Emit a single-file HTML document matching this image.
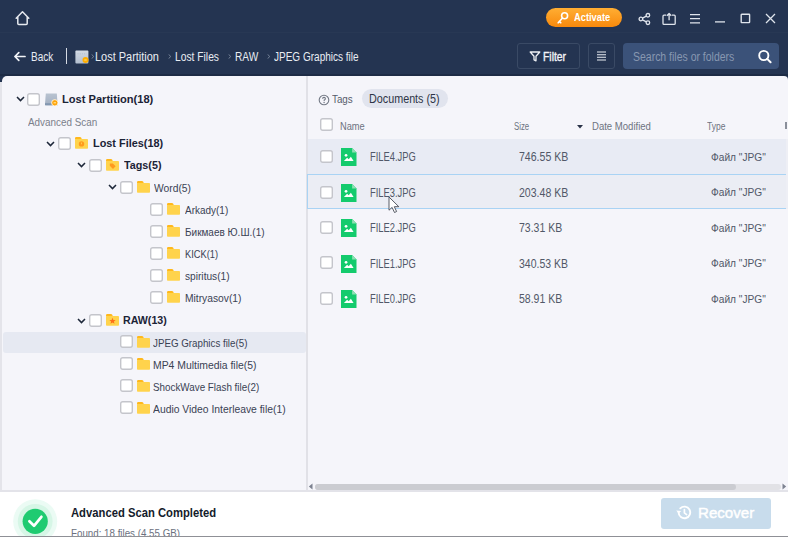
<!DOCTYPE html>
<html><head><meta charset="utf-8"><title>Recovery</title>
<style>
*{margin:0;padding:0;box-sizing:border-box}
html,body{width:788px;height:537px;overflow:hidden;background:#f4f4f9;font-family:"Liberation Sans",sans-serif}
.r{position:absolute}
.tx{position:absolute;white-space:nowrap;transform-origin:0 0}
svg{display:block}
</style></head><body>
<div class="r" style="left:0;top:0;width:788px;height:84px;background:#243451"></div>
<div class="r" style="left:0;top:32px;width:788px;height:1px;background:#283854"></div>
<div class="r" style="left:0;top:74px;width:788px;height:2px;background:#1d2b45"></div>
<svg class="r" style="left:14px;top:10px" width="17" height="17" viewBox="0 0 17 17"><path d="M2.2 8.2 L8.5 1.8 L14.8 8.2 M3.8 6.8 V13.6 Q3.8 14.6 4.8 14.6 H12.2 Q13.2 14.6 13.2 13.6 V6.8" fill="none" stroke="#e6e9ef" stroke-width="1.5" stroke-linejoin="round" stroke-linecap="round"/></svg>
<div class="r" style="left:546px;top:8px;width:76px;height:19px;border-radius:10px;background:linear-gradient(#ffae33,#f8890c)"></div>
<svg class="r" style="left:556px;top:11px" width="14" height="14" viewBox="0 0 14 14"><circle cx="8.6" cy="4.8" r="3" fill="none" stroke="#fff" stroke-width="1.6"/><path d="M6.5 7 L2.2 11.8 M3.4 10.4 L4.8 11.8" fill="none" stroke="#fff" stroke-width="1.6" stroke-linecap="round"/></svg>
<div class="tx" style="left:574.00px;top:12.11px;font-size:10.5px;line-height:10.5px;transform:scaleX(0.8863);color:#ffffff;font-weight:bold;">Activate</div>
<svg class="r" style="left:637px;top:11.5px" width="15" height="14" viewBox="0 0 15 14"><circle cx="3.9" cy="7" r="1.8" fill="none" stroke="#dfe4ec" stroke-width="1.3"/><circle cx="10.9" cy="3.3" r="1.8" fill="none" stroke="#dfe4ec" stroke-width="1.3"/><circle cx="10.9" cy="10.7" r="1.8" fill="none" stroke="#dfe4ec" stroke-width="1.3"/><path d="M5.5 6.1 L9.3 4.2 M5.5 7.9 L9.3 9.8" stroke="#dfe4ec" stroke-width="1.3"/></svg>
<svg class="r" style="left:661px;top:10.5px" width="16" height="15" viewBox="0 0 16 15"><path d="M5.2 4.2 H3 Q2 4.2 2 5.2 V12.4 Q2 13.4 3 13.4 H13.2 Q14.2 13.4 14.2 12.4 V5.2 Q14.2 4.2 13.2 4.2 H11" fill="none" stroke="#dfe4ec" stroke-width="1.3"/><path d="M8.1 9.2 V2.6 M5.9 4.8 L8.1 2.5 L10.3 4.8" fill="none" stroke="#dfe4ec" stroke-width="1.3" stroke-linejoin="round"/></svg>
<svg class="r" style="left:689px;top:13px" width="12" height="12" viewBox="0 0 12 12"><path d="M1 1.6 H11 M1 5.7 H11 M1 9.8 H11" stroke="#dfe4ec" stroke-width="1.3"/></svg>
<svg class="r" style="left:714px;top:12px" width="12" height="12" viewBox="0 0 12 12"><path d="M1 9.9 H11" stroke="#dfe4ec" stroke-width="1.3"/></svg>
<svg class="r" style="left:740px;top:13px" width="11" height="11" viewBox="0 0 11 11"><rect x="1.2" y="1.2" width="8.4" height="8.4" rx="0.6" fill="none" stroke="#dfe4ec" stroke-width="1.4"/></svg>
<svg class="r" style="left:765px;top:13px" width="11" height="11" viewBox="0 0 11 11"><path d="M1 1 L10 10 M10 1 L1 10" stroke="#dfe4ec" stroke-width="1.3"/></svg>
<svg class="r" style="left:13px;top:51px" width="13" height="11" viewBox="0 0 13 11"><path d="M12 5.5 H2.2 M5.8 1.6 L1.9 5.5 L5.8 9.4" fill="none" stroke="#f2f4f8" stroke-width="1.7" stroke-linecap="round" stroke-linejoin="round"/></svg>
<div class="tx" style="left:31.00px;top:51.14px;font-size:12.0px;line-height:12.0px;transform:scaleX(0.8333);color:#e9edf3;">Back</div>
<div class="r" style="left:66px;top:48px;width:1px;height:16px;background:#d5dae3"></div>
<svg class="r" style="left:74.5px;top:49.5px" width="14" height="14" viewBox="0 0 14 14"><defs><linearGradient id="bg2" x1="0" y1="0" x2="0" y2="1"><stop offset="0" stop-color="#d3dae4"/><stop offset="1" stop-color="#b3bfcf"/></linearGradient></defs><path d="M1.2 0.6 H12.6 Q13.4 0.6 13.4 1.6 V12.4 Q13.4 13.4 12.4 13.4 H1.4 Q0.4 13.4 0.4 12.4 V1.6 Q0.4 0.6 1.2 0.6 Z" fill="url(#bg2)"/><path d="M2.5 3.8 H11.5" stroke="#a9b9cc" stroke-width="0.8" stroke-dasharray="1 1.2"/><circle cx="10.5" cy="10" r="3" fill="#ffae00"/><path d="M9.3 10 H11.7" stroke="#ffe39a" stroke-width="0.9"/></svg>
<svg class="r" style="left:90.5px;top:54px" width="4" height="5" viewBox="0 0 4 5"><path d="M0.6 0.4 L2.8 2.5 L0.6 4.6" fill="none" stroke="#7f8ba0" stroke-width="0.9"/></svg>
<svg class="r" style="left:167.5px;top:54px" width="4" height="5" viewBox="0 0 4 5"><path d="M0.6 0.4 L2.8 2.5 L0.6 4.6" fill="none" stroke="#7f8ba0" stroke-width="0.9"/></svg>
<svg class="r" style="left:228px;top:54px" width="4" height="5" viewBox="0 0 4 5"><path d="M0.6 0.4 L2.8 2.5 L0.6 4.6" fill="none" stroke="#7f8ba0" stroke-width="0.9"/></svg>
<svg class="r" style="left:266.6px;top:54px" width="4" height="5" viewBox="0 0 4 5"><path d="M0.6 0.4 L2.8 2.5 L0.6 4.6" fill="none" stroke="#7f8ba0" stroke-width="0.9"/></svg>
<div class="tx" style="left:94.70px;top:51.34px;font-size:12px;line-height:12px;transform:scaleX(0.9126);color:#e9edf3;">Lost Partition</div>
<div class="tx" style="left:175.20px;top:51.34px;font-size:12px;line-height:12px;transform:scaleX(0.8567);color:#e9edf3;">Lost Files</div>
<div class="tx" style="left:234.60px;top:51.34px;font-size:12px;line-height:12px;transform:scaleX(0.8424);color:#e9edf3;">RAW</div>
<div class="tx" style="left:274.00px;top:51.34px;font-size:12px;line-height:12px;transform:scaleX(0.8348);color:#e9edf3;">JPEG Graphics file</div>
<div class="r" style="left:517px;top:43px;width:63px;height:26px;border:1px solid #3a4a65;border-radius:3px"></div>
<svg class="r" style="left:529px;top:51px" width="12" height="11" viewBox="0 0 12 11"><path d="M1.2 1 H10.8 L7 5.3 V9.8 L5 8.8 V5.3 Z" fill="none" stroke="#eef1f5" stroke-width="1.3" stroke-linejoin="round"/></svg>
<div class="tx" style="left:542.70px;top:51.14px;font-size:12px;line-height:12px;transform:scaleX(0.8634);color:#f2f4f8;-webkit-text-stroke:0.35px #f2f4f8;">Filter</div>
<div class="r" style="left:588px;top:43px;width:27px;height:26px;border:1px solid #3a4a65;border-radius:3px"></div>
<svg class="r" style="left:596px;top:51px" width="11" height="10" viewBox="0 0 11 10"><path d="M1 1 H10 M1 3.7 H10 M1 6.3 H10 M1 9 H10" stroke="#e8ecf2" stroke-width="1.1"/></svg>
<div class="r" style="left:623px;top:43px;width:156px;height:26px;border-radius:4px;background:#3b5279"></div>
<div class="tx" style="left:632.70px;top:50.84px;font-size:12px;line-height:12px;transform:scaleX(0.8730);color:#8898b1;">Search files or folders</div>
<svg class="r" style="left:757px;top:49px" width="16" height="15" viewBox="0 0 16 15"><circle cx="6.8" cy="6.5" r="4.6" fill="none" stroke="#fff" stroke-width="1.9"/><path d="M10.2 9.9 L13.6 13.2" stroke="#fff" stroke-width="2" stroke-linecap="round"/></svg>
<div class="r" style="left:0;top:82px;width:2px;height:409px;background:#e4e4ea"></div>
<div class="r" style="left:2px;top:76px;width:786px;height:415px;background:#f5f5fa;border-top-left-radius:5px;border-top-right-radius:4px"></div>
<div class="r" style="left:306px;top:76px;width:2px;height:414px;background:#e1e1e7"></div>
<svg class="r" style="left:16px;top:96px" width="9" height="6" viewBox="0 0 9 6"><path d="M1 1 L4.5 4.6 L8 1" fill="none" stroke="#1d2739" stroke-width="1.5"/></svg>
<svg class="r" style="left:27px;top:92.5px" width="13" height="13" viewBox="0 0 13 13"><rect x="0.7" y="0.7" width="11.6" height="11.6" rx="2" fill="#fff" stroke="#c4c5cb" stroke-width="1.4"/></svg>
<svg class="r" style="left:44.5px;top:92.5px" width="14" height="13" viewBox="0 0 14 13"><defs><linearGradient id="dg" x1="0" y1="0" x2="0" y2="1"><stop offset="0" stop-color="#b9c3d1"/><stop offset="1" stop-color="#a2afc1"/></linearGradient></defs><path d="M0.8 0.5 H11.8 L12.6 11 Q12.6 12.3 11.4 12.3 H1.2 Q0 12.3 0 11 Z" fill="url(#dg)"/><rect x="0" y="10.2" width="12.6" height="2.1" fill="#8397b0"/><circle cx="9.8" cy="9.8" r="3.2" fill="#ffa50a" stroke="#fff" stroke-width="0.8"/><path d="M8.6 9.8 H11" stroke="#fff2c0" stroke-width="0.9"/></svg>
<div class="tx" style="left:61.70px;top:93.68px;font-size:11px;line-height:11px;transform:scaleX(1.0091);color:#1b2336;font-weight:bold;">Lost Partition(18)</div>
<div class="tx" style="left:27.90px;top:117.28px;font-size:11px;line-height:11px;transform:scaleX(0.8994);color:#7b808b;">Advanced Scan</div>
<svg class="r" style="left:46px;top:141px" width="9" height="6" viewBox="0 0 9 6"><path d="M1 1 L4.5 4.6 L8 1" fill="none" stroke="#1d2739" stroke-width="1.5"/></svg>
<svg class="r" style="left:58px;top:137px" width="13" height="13" viewBox="0 0 13 13"><rect x="0.7" y="0.7" width="11.6" height="11.6" rx="2" fill="#fff" stroke="#c4c5cb" stroke-width="1.4"/></svg>
<svg class="r" style="left:75px;top:137.4px" width="13" height="12" viewBox="0 0 13 12"><path d="M0 2.4 V1.2 Q0 0 1.2 0 H5 Q5.8 0 6.2 0.7 L7 2.4 Z" fill="#ffb81c"/><rect x="0" y="2" width="13" height="9.8" rx="0.8" fill="#ffd34c"/><circle cx="6.5" cy="6.9" r="2.7" fill="#ff9a1c"/><path d="M6.5 5.5 V7.3" stroke="#ffd34c" stroke-width="0.9"/></svg>
<div class="tx" style="left:92.50px;top:137.68px;font-size:11px;line-height:11px;transform:scaleX(0.9888);color:#1b2336;font-weight:bold;">Lost Files(18)</div>
<svg class="r" style="left:77px;top:162px" width="9" height="6" viewBox="0 0 9 6"><path d="M1 1 L4.5 4.6 L8 1" fill="none" stroke="#1d2739" stroke-width="1.5"/></svg>
<svg class="r" style="left:89px;top:158.5px" width="13" height="13" viewBox="0 0 13 13"><rect x="0.7" y="0.7" width="11.6" height="11.6" rx="2" fill="#fff" stroke="#c4c5cb" stroke-width="1.4"/></svg>
<svg class="r" style="left:106px;top:159px" width="13" height="12" viewBox="0 0 13 12"><path d="M0 2.4 V1.2 Q0 0 1.2 0 H5 Q5.8 0 6.2 0.7 L7 2.4 Z" fill="#ffb81c"/><rect x="0" y="2" width="13" height="9.8" rx="0.8" fill="#ffd34c"/><path d="M3.8 4.6 L6.9 4.6 L9.6 7.3 L7 9.9 L3.8 6.8 Z" fill="#ff9a1c"/></svg>
<div class="tx" style="left:123.80px;top:159.68px;font-size:11px;line-height:11px;transform:scaleX(0.9796);color:#1b2336;font-weight:bold;">Tags(5)</div>
<svg class="r" style="left:108px;top:184px" width="9" height="6" viewBox="0 0 9 6"><path d="M1 1 L4.5 4.6 L8 1" fill="none" stroke="#1d2739" stroke-width="1.5"/></svg>
<svg class="r" style="left:120px;top:180.5px" width="13" height="13" viewBox="0 0 13 13"><rect x="0.7" y="0.7" width="11.6" height="11.6" rx="2" fill="#fff" stroke="#c4c5cb" stroke-width="1.4"/></svg>
<svg class="r" style="left:137px;top:181px" width="13" height="12" viewBox="0 0 13 12"><path d="M0 2.4 V1.2 Q0 0 1.2 0 H5 Q5.8 0 6.2 0.7 L7 2.4 Z" fill="#ffb81c"/><rect x="0" y="2" width="13" height="9.8" rx="0.8" fill="#ffd34c"/></svg>
<div class="tx" style="left:153.50px;top:182.86px;font-size:11.5px;line-height:11.5px;transform:scaleX(0.8950);color:#3a4254;">Word(5)</div>
<svg class="r" style="left:150px;top:202.5px" width="13" height="13" viewBox="0 0 13 13"><rect x="0.7" y="0.7" width="11.6" height="11.6" rx="2" fill="#fff" stroke="#c4c5cb" stroke-width="1.4"/></svg>
<svg class="r" style="left:167px;top:203px" width="13" height="12" viewBox="0 0 13 12"><path d="M0 2.4 V1.2 Q0 0 1.2 0 H5 Q5.8 0 6.2 0.7 L7 2.4 Z" fill="#ffb81c"/><rect x="0" y="2" width="13" height="9.8" rx="0.8" fill="#ffd34c"/></svg>
<div class="tx" style="left:184.50px;top:205.26px;font-size:11.5px;line-height:11.5px;transform:scaleX(0.8666);color:#3a4254;">Arkady(1)</div>
<svg class="r" style="left:150px;top:224.5px" width="13" height="13" viewBox="0 0 13 13"><rect x="0.7" y="0.7" width="11.6" height="11.6" rx="2" fill="#fff" stroke="#c4c5cb" stroke-width="1.4"/></svg>
<svg class="r" style="left:167px;top:225px" width="13" height="12" viewBox="0 0 13 12"><path d="M0 2.4 V1.2 Q0 0 1.2 0 H5 Q5.8 0 6.2 0.7 L7 2.4 Z" fill="#ffb81c"/><rect x="0" y="2" width="13" height="9.8" rx="0.8" fill="#ffd34c"/></svg>
<div class="tx" style="left:184.50px;top:227.26px;font-size:11.5px;line-height:11.5px;transform:scaleX(0.8679);color:#3a4254;">Бикмаев Ю.Ш.(1)</div>
<svg class="r" style="left:150px;top:246.5px" width="13" height="13" viewBox="0 0 13 13"><rect x="0.7" y="0.7" width="11.6" height="11.6" rx="2" fill="#fff" stroke="#c4c5cb" stroke-width="1.4"/></svg>
<svg class="r" style="left:167px;top:247px" width="13" height="12" viewBox="0 0 13 12"><path d="M0 2.4 V1.2 Q0 0 1.2 0 H5 Q5.8 0 6.2 0.7 L7 2.4 Z" fill="#ffb81c"/><rect x="0" y="2" width="13" height="9.8" rx="0.8" fill="#ffd34c"/></svg>
<div class="tx" style="left:184.50px;top:249.26px;font-size:11.5px;line-height:11.5px;transform:scaleX(0.8072);color:#3a4254;">KICK(1)</div>
<svg class="r" style="left:150px;top:268.5px" width="13" height="13" viewBox="0 0 13 13"><rect x="0.7" y="0.7" width="11.6" height="11.6" rx="2" fill="#fff" stroke="#c4c5cb" stroke-width="1.4"/></svg>
<svg class="r" style="left:167px;top:269px" width="13" height="12" viewBox="0 0 13 12"><path d="M0 2.4 V1.2 Q0 0 1.2 0 H5 Q5.8 0 6.2 0.7 L7 2.4 Z" fill="#ffb81c"/><rect x="0" y="2" width="13" height="9.8" rx="0.8" fill="#ffd34c"/></svg>
<div class="tx" style="left:184.50px;top:271.26px;font-size:11.5px;line-height:11.5px;transform:scaleX(0.8834);color:#3a4254;">spiritus(1)</div>
<svg class="r" style="left:150px;top:290.5px" width="13" height="13" viewBox="0 0 13 13"><rect x="0.7" y="0.7" width="11.6" height="11.6" rx="2" fill="#fff" stroke="#c4c5cb" stroke-width="1.4"/></svg>
<svg class="r" style="left:167px;top:291px" width="13" height="12" viewBox="0 0 13 12"><path d="M0 2.4 V1.2 Q0 0 1.2 0 H5 Q5.8 0 6.2 0.7 L7 2.4 Z" fill="#ffb81c"/><rect x="0" y="2" width="13" height="9.8" rx="0.8" fill="#ffd34c"/></svg>
<div class="tx" style="left:184.50px;top:293.26px;font-size:11.5px;line-height:11.5px;transform:scaleX(0.8933);color:#3a4254;">Mitryasov(1)</div>
<div class="r" style="left:3px;top:332px;width:303px;height:21px;background:#e6e9f2;border-radius:3px"></div>
<svg class="r" style="left:77px;top:318px" width="9" height="6" viewBox="0 0 9 6"><path d="M1 1 L4.5 4.6 L8 1" fill="none" stroke="#1d2739" stroke-width="1.5"/></svg>
<svg class="r" style="left:89px;top:314px" width="13" height="13" viewBox="0 0 13 13"><rect x="0.7" y="0.7" width="11.6" height="11.6" rx="2" fill="#fff" stroke="#c4c5cb" stroke-width="1.4"/></svg>
<svg class="r" style="left:106px;top:314.2px" width="13" height="12" viewBox="0 0 13 12"><path d="M0 2.4 V1.2 Q0 0 1.2 0 H5 Q5.8 0 6.2 0.7 L7 2.4 Z" fill="#ffb81c"/><rect x="0" y="2" width="13" height="9.8" rx="0.8" fill="#ffd34c"/><path d="M6.5 3.8 L7.4 6 L9.6 6.1 L7.9 7.5 L8.5 9.7 L6.5 8.5 L4.5 9.7 L5.1 7.5 L3.4 6.1 L5.6 6 Z" fill="#ff6f1a"/></svg>
<div class="tx" style="left:123.20px;top:314.68px;font-size:11px;line-height:11px;transform:scaleX(0.9688);color:#1b2336;font-weight:bold;">RAW(13)</div>
<svg class="r" style="left:119.5px;top:335px" width="13" height="13" viewBox="0 0 13 13"><rect x="0.7" y="0.7" width="11.6" height="11.6" rx="2" fill="#fff" stroke="#c4c5cb" stroke-width="1.4"/></svg>
<svg class="r" style="left:137px;top:335.7px" width="13" height="12" viewBox="0 0 13 12"><path d="M0 2.4 V1.2 Q0 0 1.2 0 H5 Q5.8 0 6.2 0.7 L7 2.4 Z" fill="#ffb81c"/><rect x="0" y="2" width="13" height="9.8" rx="0.8" fill="#ffd34c"/></svg>
<div class="tx" style="left:153.40px;top:337.56px;font-size:11.5px;line-height:11.5px;transform:scaleX(0.8489);color:#3a4254;">JPEG Graphics file(5)</div>
<svg class="r" style="left:119.5px;top:357px" width="13" height="13" viewBox="0 0 13 13"><rect x="0.7" y="0.7" width="11.6" height="11.6" rx="2" fill="#fff" stroke="#c4c5cb" stroke-width="1.4"/></svg>
<svg class="r" style="left:137px;top:357.7px" width="13" height="12" viewBox="0 0 13 12"><path d="M0 2.4 V1.2 Q0 0 1.2 0 H5 Q5.8 0 6.2 0.7 L7 2.4 Z" fill="#ffb81c"/><rect x="0" y="2" width="13" height="9.8" rx="0.8" fill="#ffd34c"/></svg>
<div class="tx" style="left:153.40px;top:359.56px;font-size:11.5px;line-height:11.5px;transform:scaleX(0.9045);color:#3a4254;">MP4 Multimedia file(5)</div>
<svg class="r" style="left:119.5px;top:379px" width="13" height="13" viewBox="0 0 13 13"><rect x="0.7" y="0.7" width="11.6" height="11.6" rx="2" fill="#fff" stroke="#c4c5cb" stroke-width="1.4"/></svg>
<svg class="r" style="left:137px;top:379.7px" width="13" height="12" viewBox="0 0 13 12"><path d="M0 2.4 V1.2 Q0 0 1.2 0 H5 Q5.8 0 6.2 0.7 L7 2.4 Z" fill="#ffb81c"/><rect x="0" y="2" width="13" height="9.8" rx="0.8" fill="#ffd34c"/></svg>
<div class="tx" style="left:153.40px;top:381.56px;font-size:11.5px;line-height:11.5px;transform:scaleX(0.8551);color:#3a4254;">ShockWave Flash file(2)</div>
<svg class="r" style="left:119.5px;top:401px" width="13" height="13" viewBox="0 0 13 13"><rect x="0.7" y="0.7" width="11.6" height="11.6" rx="2" fill="#fff" stroke="#c4c5cb" stroke-width="1.4"/></svg>
<svg class="r" style="left:137px;top:401.7px" width="13" height="12" viewBox="0 0 13 12"><path d="M0 2.4 V1.2 Q0 0 1.2 0 H5 Q5.8 0 6.2 0.7 L7 2.4 Z" fill="#ffb81c"/><rect x="0" y="2" width="13" height="9.8" rx="0.8" fill="#ffd34c"/></svg>
<div class="tx" style="left:153.40px;top:403.56px;font-size:11.5px;line-height:11.5px;transform:scaleX(0.8991);color:#3a4254;">Audio Video Interleave file(1)</div>
<svg class="r" style="left:318px;top:94px" width="12" height="12" viewBox="0 0 12 12"><circle cx="6" cy="6" r="4.8" fill="none" stroke="#737985" stroke-width="1.1"/><path d="M4.6 4.8 Q4.6 3.4 6 3.4 Q7.4 3.4 7.4 4.7 Q7.4 5.6 6.2 6.1 V7" fill="none" stroke="#737985" stroke-width="1.1"/><circle cx="6.1" cy="8.5" r="0.7" fill="#737985"/></svg>
<div class="tx" style="left:332.30px;top:94.38px;font-size:11px;line-height:11px;transform:scaleX(0.8919);color:#555c6b;">Tags</div>
<div class="r" style="left:362px;top:89px;width:86px;height:19px;border-radius:10px;background:#e1e4ee"></div>
<div class="tx" style="left:369.30px;top:92.74px;font-size:12px;line-height:12px;transform:scaleX(0.8981);color:#2e3547;">Documents (5)</div>
<svg class="r" style="left:320px;top:118px" width="13" height="13" viewBox="0 0 13 13"><rect x="0.7" y="0.7" width="11.6" height="11.6" rx="2" fill="#fff" stroke="#c4c5cb" stroke-width="1.4"/></svg>
<div class="tx" style="left:340.00px;top:121.63px;font-size:10px;line-height:10px;transform:scaleX(0.9288);color:#6d7381;">Name</div>
<div class="tx" style="left:513.80px;top:121.73px;font-size:10px;line-height:10px;transform:scaleX(0.7815);color:#6d7381;">Size</div>
<svg class="r" style="left:577px;top:125px" width="6" height="4" viewBox="0 0 6 4"><path d="M0 0 H6 L3 3.6 Z" fill="#2a3348"/></svg>
<div class="tx" style="left:592.40px;top:121.73px;font-size:10px;line-height:10px;transform:scaleX(0.9546);color:#6d7381;">Date Modified</div>
<div class="tx" style="left:706.60px;top:121.73px;font-size:10px;line-height:10px;transform:scaleX(0.8479);color:#6d7381;">Type</div>
<div class="r" style="left:785px;top:122px;width:1.5px;height:7px;background:#8a8f9a"></div>
<div class="r" style="left:308px;top:139px;width:478px;height:35px;background:#e8ebf4"></div><div class="r" style="left:786px;top:139px;width:2px;height:70px;background:#eeeff5"></div>
<div class="r" style="left:307px;top:174px;width:479px;height:35px;background:#ebedf4;border:1px solid #a9d3f4;border-right:none"></div>
<svg class="r" style="left:320px;top:150px" width="13" height="13" viewBox="0 0 13 13"><rect x="0.7" y="0.7" width="11.6" height="11.6" rx="2" fill="#fff" stroke="#c4c5cb" stroke-width="1.4"/></svg>
<svg class="r" style="left:341px;top:148.0px" width="15.5" height="18" viewBox="0 0 16 18" preserveAspectRatio="none"><path d="M0 0 H11.5 L16 4.5 V18 H0 Z" fill="#14cb6d"/><path d="M11.5 0 V4.5 H16" fill="#8ee0b3"/><circle cx="5.2" cy="7.3" r="1.4" fill="#fff"/><path d="M3 13 L6.3 9.8 L8 11.2 L10.2 8.8 L13 13 Z" fill="#fff"/></svg>
<div class="tx" style="left:369.50px;top:151.34px;font-size:12px;line-height:12px;transform:scaleX(0.7788);color:#515868;">FILE4.JPG</div>
<div class="tx" style="left:519.20px;top:151.04px;font-size:12px;line-height:12px;transform:scaleX(0.8797);color:#515868;">746.55 KB</div>
<div class="tx" style="left:711.20px;top:151.76px;font-size:11.5px;line-height:11.5px;transform:scaleX(0.8841);color:#515868;">Файл &quot;JPG&quot;</div>
<svg class="r" style="left:320px;top:186px" width="13" height="13" viewBox="0 0 13 13"><rect x="0.7" y="0.7" width="11.6" height="11.6" rx="2" fill="#fff" stroke="#c4c5cb" stroke-width="1.4"/></svg>
<svg class="r" style="left:341px;top:183.5px" width="15.5" height="18" viewBox="0 0 16 18" preserveAspectRatio="none"><path d="M0 0 H11.5 L16 4.5 V18 H0 Z" fill="#14cb6d"/><path d="M11.5 0 V4.5 H16" fill="#8ee0b3"/><circle cx="5.2" cy="7.3" r="1.4" fill="#fff"/><path d="M3 13 L6.3 9.8 L8 11.2 L10.2 8.8 L13 13 Z" fill="#fff"/></svg>
<div class="tx" style="left:369.50px;top:186.84px;font-size:12px;line-height:12px;transform:scaleX(0.7788);color:#515868;">FILE3.JPG</div>
<div class="tx" style="left:519.20px;top:186.54px;font-size:12px;line-height:12px;transform:scaleX(0.8797);color:#515868;">203.48 KB</div>
<div class="tx" style="left:711.20px;top:187.26px;font-size:11.5px;line-height:11.5px;transform:scaleX(0.8841);color:#515868;">Файл &quot;JPG&quot;</div>
<svg class="r" style="left:320px;top:221px" width="13" height="13" viewBox="0 0 13 13"><rect x="0.7" y="0.7" width="11.6" height="11.6" rx="2" fill="#fff" stroke="#c4c5cb" stroke-width="1.4"/></svg>
<svg class="r" style="left:341px;top:219.0px" width="15.5" height="18" viewBox="0 0 16 18" preserveAspectRatio="none"><path d="M0 0 H11.5 L16 4.5 V18 H0 Z" fill="#14cb6d"/><path d="M11.5 0 V4.5 H16" fill="#8ee0b3"/><circle cx="5.2" cy="7.3" r="1.4" fill="#fff"/><path d="M3 13 L6.3 9.8 L8 11.2 L10.2 8.8 L13 13 Z" fill="#fff"/></svg>
<div class="tx" style="left:369.50px;top:222.34px;font-size:12px;line-height:12px;transform:scaleX(0.7788);color:#515868;">FILE2.JPG</div>
<div class="tx" style="left:519.20px;top:222.04px;font-size:12px;line-height:12px;transform:scaleX(0.8748);color:#515868;">73.31 KB</div>
<div class="tx" style="left:711.20px;top:222.76px;font-size:11.5px;line-height:11.5px;transform:scaleX(0.8841);color:#515868;">Файл &quot;JPG&quot;</div>
<svg class="r" style="left:320px;top:256px" width="13" height="13" viewBox="0 0 13 13"><rect x="0.7" y="0.7" width="11.6" height="11.6" rx="2" fill="#fff" stroke="#c4c5cb" stroke-width="1.4"/></svg>
<svg class="r" style="left:341px;top:254.5px" width="15.5" height="18" viewBox="0 0 16 18" preserveAspectRatio="none"><path d="M0 0 H11.5 L16 4.5 V18 H0 Z" fill="#14cb6d"/><path d="M11.5 0 V4.5 H16" fill="#8ee0b3"/><circle cx="5.2" cy="7.3" r="1.4" fill="#fff"/><path d="M3 13 L6.3 9.8 L8 11.2 L10.2 8.8 L13 13 Z" fill="#fff"/></svg>
<div class="tx" style="left:369.50px;top:257.84px;font-size:12px;line-height:12px;transform:scaleX(0.7788);color:#515868;">FILE1.JPG</div>
<div class="tx" style="left:519.20px;top:257.54px;font-size:12px;line-height:12px;transform:scaleX(0.8744);color:#515868;">340.53 KB</div>
<div class="tx" style="left:711.20px;top:258.26px;font-size:11.5px;line-height:11.5px;transform:scaleX(0.8841);color:#515868;">Файл &quot;JPG&quot;</div>
<svg class="r" style="left:320px;top:292px" width="13" height="13" viewBox="0 0 13 13"><rect x="0.7" y="0.7" width="11.6" height="11.6" rx="2" fill="#fff" stroke="#c4c5cb" stroke-width="1.4"/></svg>
<svg class="r" style="left:341px;top:290.0px" width="15.5" height="18" viewBox="0 0 16 18" preserveAspectRatio="none"><path d="M0 0 H11.5 L16 4.5 V18 H0 Z" fill="#14cb6d"/><path d="M11.5 0 V4.5 H16" fill="#8ee0b3"/><circle cx="5.2" cy="7.3" r="1.4" fill="#fff"/><path d="M3 13 L6.3 9.8 L8 11.2 L10.2 8.8 L13 13 Z" fill="#fff"/></svg>
<div class="tx" style="left:369.50px;top:293.34px;font-size:12px;line-height:12px;transform:scaleX(0.7788);color:#515868;">FILE0.JPG</div>
<div class="tx" style="left:519.20px;top:293.04px;font-size:12px;line-height:12px;transform:scaleX(0.8748);color:#515868;">58.91 KB</div>
<div class="tx" style="left:711.20px;top:293.76px;font-size:11.5px;line-height:11.5px;transform:scaleX(0.8841);color:#515868;">Файл &quot;JPG&quot;</div>
<svg class="r" style="left:388px;top:196px" width="13" height="18" viewBox="0 0 13 18"><path d="M1 1 V14.2 L4.1 11.4 L6.5 16.5 L8.6 15.5 L6.3 10.7 H10.8 Z" fill="#fff" stroke="#454a55" stroke-width="0.9" stroke-linejoin="round"/></svg>
<div class="r" style="left:308px;top:482px;width:480px;height:9px;background:#f5f5fa"></div>
<svg class="r" style="left:308px;top:483px" width="5" height="7" viewBox="0 0 5 7"><path d="M4.5 0.5 L0.8 3.5 L4.5 6.5 Z" fill="#7d8290"/></svg>
<div class="r" style="left:315px;top:484px;width:466px;height:6px;border-radius:3px;background:#e2e2e6"></div>
<div class="r" style="left:315px;top:484px;width:421px;height:6px;border-radius:3px;background:#cbccd1"></div>
<svg class="r" style="left:782px;top:483px" width="5" height="7" viewBox="0 0 5 7"><path d="M0.5 0.5 L4.2 3.5 L0.5 6.5 Z" fill="#7d8290"/></svg>
<div class="r" style="left:0;top:491px;width:788px;height:46px;background:#ffffff"></div>
<div class="r" style="left:0;top:490px;width:788px;height:2px;background:#e3e3e9"></div>
<svg class="r" style="left:12px;top:498px" width="47" height="39" viewBox="0 0 47 39"><circle cx="23.2" cy="23.3" r="22" fill="#ebfbf4"/><circle cx="23.2" cy="23.3" r="17.4" fill="#d6f6e6"/><circle cx="23.2" cy="23.3" r="12.6" fill="#1fcb71"/><path d="M17.4 23.3 L22 27.8 L29.4 18.8" fill="none" stroke="#fff" stroke-width="2.7" stroke-linecap="round" stroke-linejoin="round"/></svg>
<div class="tx" style="left:70.70px;top:507.41px;font-size:12.5px;line-height:12.5px;transform:scaleX(0.8999);color:#141b2b;font-weight:bold;">Advanced Scan Completed</div>
<div class="tx" style="left:70.70px;top:527.86px;font-size:11.5px;line-height:11.5px;transform:scaleX(0.8482);color:#6b7180;">Found: 18 files (4.55 GB)</div>
<div class="r" style="left:661px;top:498px;width:110px;height:31px;border-radius:3px;background:#c8dcec"></div>
<svg class="r" style="left:675px;top:505px" width="17" height="15" viewBox="0 0 17 15"><path d="M3.6 7.5 A5.8 5.8 0 1 0 5.3 3.3" fill="none" stroke="#fff" stroke-width="1.9" stroke-linecap="round"/><path d="M1.2 5.6 L3.6 8.6 L6.3 5.9 Z" fill="#fff"/><path d="M9.4 4.6 V7.9 L11.6 9.6" fill="none" stroke="#fff" stroke-width="1.7" stroke-linecap="round"/></svg>
<div class="tx" style="left:698.00px;top:505.37px;font-size:15.5px;line-height:15.5px;transform:scaleX(0.9734);color:#ffffff;-webkit-text-stroke:0.45px #fff;">Recover</div>
<div class="r" style="left:0;top:536px;width:788px;height:1px;background:#8f9096"></div>
</body></html>
